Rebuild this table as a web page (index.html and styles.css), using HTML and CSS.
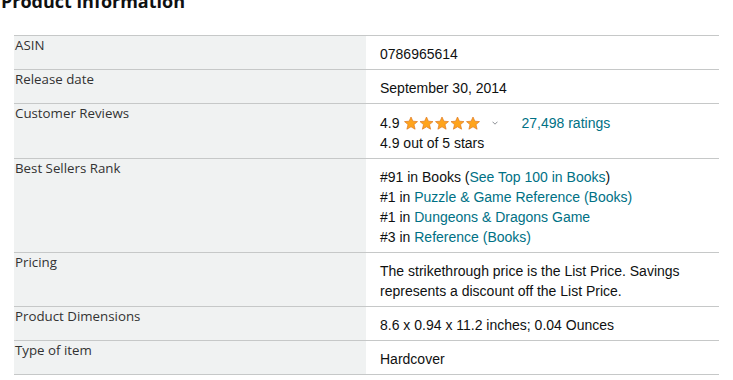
FILE: index.html
```html
<!DOCTYPE html>
<html lang="en">
<head>
<meta charset="utf-8">
<title>Product information</title>
<link rel="stylesheet" href="styles.css">
</head>
<body>
<section class="product-info">
  <h2 class="title">Product information</h2>
  <table class="details">
    <tbody>
      <tr>
        <th>ASIN</th>
        <td>0786965614</td>
      </tr>
      <tr>
        <th>Release date</th>
        <td>September 30, 2014</td>
      </tr>
      <tr>
        <th>Customer Reviews</th>
        <td>
          <div class="rating-line">
            <span class="score">4.9</span>
            <svg class="stars" width="78" height="14" viewBox="0 0 78 14" aria-hidden="true">
              <defs>
                <path id="star" d="M7 0.6 L8.9 4.8 L13.5 5.2 L10 8.2 L11.1 12.8 L7 10.4 L2.9 12.8 L4 8.2 L0.5 5.2 L5.1 4.8 Z"/>
              </defs>
              <use href="#star" x="0" y="0.4"/>
              <use href="#star" x="15.5" y="0.4"/>
              <use href="#star" x="31" y="0.4"/>
              <use href="#star" x="46.5" y="0.4"/>
              <use href="#star" x="62" y="0.4"/>
            </svg>
            <svg class="chev" width="6" height="4" viewBox="0 0 6 4" aria-hidden="true">
              <polyline points="0.5,0.7 3,3.2 5.5,0.7"/>
            </svg>
            <a class="link ratings" href="#">27,498 ratings</a>
          </div>
          <div>4.9 out of 5 stars</div>
        </td>
      </tr>
      <tr>
        <th>Best Sellers Rank</th>
        <td>
          <div>#91 in Books (<a class="link" href="#">See Top 100 in Books</a>)</div>
          <div>#1 in <a class="link" href="#">Puzzle &amp; Game Reference (Books)</a></div>
          <div>#1 in <a class="link" href="#">Dungeons &amp; Dragons Game</a></div>
          <div>#3 in <a class="link" href="#">Reference (Books)</a></div>
        </td>
      </tr>
      <tr>
        <th>Pricing</th>
        <td>The strikethrough price is the List Price. Savings<br>represents a discount off the List Price.</td>
      </tr>
      <tr>
        <th>Product Dimensions</th>
        <td>8.6 x 0.94 x 11.2 inches; 0.04 Ounces</td>
      </tr>
      <tr>
        <th>Type of item</th>
        <td>Hardcover</td>
      </tr>
    </tbody>
  </table>
</section>
</body>
</html>
```

FILE: styles.css
```css
html, body {
  margin: 0;
  padding: 0;
  background: #ffffff;
}

.product-info {
  padding: 0;
}

.title {
  margin: -10px 0 0 1px;
  font-family: "Open Sans", "Noto Sans", sans-serif;
  font-weight: 700;
  font-size: 18px;
  line-height: 22px;
  color: #0f1111;
}

.details {
  margin: 23px 0 0 14px;
  width: 705px;
  border-collapse: collapse;
  border-bottom: 1px solid #c6c8c8;
}

.details tr {
  border-top: 1px solid #c6c8c8;
}

.details th {
  width: 337px;
  padding: 0 14px 0 1px;
  background: #f0f2f2;
  text-align: left;
  vertical-align: top;
  font-family: "Open Sans", "Noto Sans", sans-serif;
  font-weight: 400;
  font-size: 13.3px;
  line-height: 19px;
  color: #333333;
}

.details td {
  padding: 8px 14px 5px 14px;
  vertical-align: top;
  font-family: "Liberation Sans", Arial, sans-serif;
  font-size: 14px;
  line-height: 20px;
  color: #0f1111;
}

.rating-line {
  display: flex;
  align-items: center;
  height: 21px;
}

.stars {
  margin-left: 5px;
  fill: #ffa41c;
  stroke: #de7921;
  stroke-width: 0.7;
  stroke-linejoin: round;
}

.chev {
  margin-left: 10px;
  fill: none;
  stroke: #8d9096;
  stroke-width: 1;
}

.ratings {
  margin-left: 23px;
}

.link {
  color: #007185;
  text-decoration: none;
}
```
